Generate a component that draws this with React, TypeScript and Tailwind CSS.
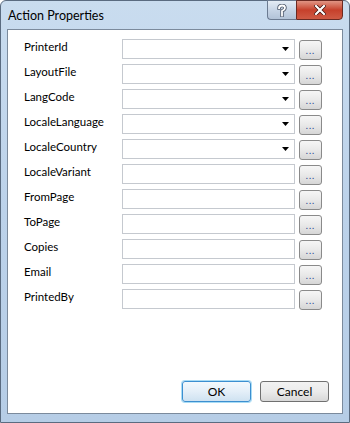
import React from "react";

const rows = [
  { label: "PrinterId", combo: true },
  { label: "LayoutFile", combo: true },
  { label: "LangCode", combo: true },
  { label: "LocaleLanguage", combo: true },
  { label: "LocaleCountry", combo: true },
  { label: "LocaleVariant", combo: false },
  { label: "FromPage", combo: false },
  { label: "ToPage", combo: false },
  { label: "Copies", combo: false },
  { label: "Email", combo: false },
  { label: "PrintedBy", combo: false },
];

function EllipsisButton() {
  return (
    <div className="w-[23px] h-[20px] mt-[1px] rounded-[3px] border border-[#8a8a8a] bg-gradient-to-b from-[#f6f6f6] via-[#e9e9e9] to-[#d6d6d6] flex items-end justify-center pb-[4px]">
      <span className="text-[9px] leading-none text-[#1a3f8f] tracking-[1px]">...</span>
    </div>
  );
}

export default function App() {
  return (
    <div
      className="w-[350px] h-[423px] flex flex-col bg-gradient-to-b from-[#c9dcef] via-[#bcd2ea] to-[#b6cde6] border border-[#5a6b80] rounded-t-[6px] text-black"
      style={{ fontFamily: 'Lato, "Liberation Sans", sans-serif' }}
    >
      {/* title bar */}
      <div className="h-[28px] flex items-start justify-between">
        <div className="pl-[7px] pt-[7px] text-[12.5px] leading-[16px] text-black">Action Properties</div>
        <div className="flex mr-[6px] -mt-[1px]">
          <div className="w-[29px] h-[20px] rounded-bl-[4px] border border-[#6b7b91] border-r-0 bg-gradient-to-b from-[#e4ecf5] via-[#c7d5e6] to-[#b2c3d8] flex items-center justify-center">
            <svg width="10" height="13" viewBox="0 0 10 13">
              <path d="M2 4 Q2 1.5 5 1.5 Q8 1.5 8 4 Q8 5.5 5 7 V8.5 M5 10.5 V11.5" fill="none" stroke="#4a5568" strokeWidth="3.4" strokeLinecap="square" />
              <path d="M2 4 Q2 1.5 5 1.5 Q8 1.5 8 4 Q8 5.5 5 7 V8.5 M5 10.5 V11.5" fill="none" stroke="#ffffff" strokeWidth="1.8" strokeLinecap="square" />
            </svg>
          </div>
          <div className="w-[47px] h-[20px] rounded-br-[4px] border border-[#6b2a22] bg-gradient-to-b from-[#e09484] via-[#c6402b] to-[#cf5a44] flex items-center justify-center">
            <svg width="12" height="10" viewBox="0 0 12 10">
              <path d="M2 1 L10 9 M10 1 L2 9" stroke="#3a0d08" strokeWidth="3.6" strokeLinecap="square" />
              <path d="M2 1 L10 9 M10 1 L2 9" stroke="#ffffff" strokeWidth="2.2" strokeLinecap="square" />
            </svg>
          </div>
        </div>
      </div>

      {/* client area */}
      <div className="flex-1 mx-[6px] border border-[#7b8a9c] bg-white flex flex-col">
        <div className="flex flex-col gap-[5px] pt-[9px] pl-[16px]">
          {rows.map((r) => (
            <div key={r.label} className="flex items-start h-[20px]">
              <div className="w-[98px] text-[11.5px] leading-[16px]">{r.label}</div>
              <div className="w-[173px] h-[20px] border border-[#c5c9cf] bg-white flex items-center justify-end pr-[5px]">
                {r.combo && (
                  <svg width="7" height="4" viewBox="0 0 7 4">
                    <path d="M0 0 H7 L3.5 4 Z" fill="#000" />
                  </svg>
                )}
              </div>
              <div className="ml-[4px]">
                <EllipsisButton />
              </div>
            </div>
          ))}
        </div>
        <div className="flex-1" />
        <div className="flex justify-end gap-[9px] pr-[13px] pb-[11px]">
          <div className="w-[69px] h-[21px] rounded-[3px] border border-[#3c8fd0] bg-gradient-to-b from-[#f3f9fd] via-[#e4eff8] to-[#cfe2f1] shadow-[0_0_0_1px_#a9dcf5] flex items-center justify-center text-[12px]">
            OK
          </div>
          <div className="w-[69px] h-[21px] rounded-[3px] border border-[#707070] bg-gradient-to-b from-[#f2f2f2] via-[#ebebeb] to-[#d8d8d8] flex items-center justify-center text-[12px]">
            Cancel
          </div>
        </div>
      </div>
      <div className="h-[8px]" />
    </div>
  );
}
